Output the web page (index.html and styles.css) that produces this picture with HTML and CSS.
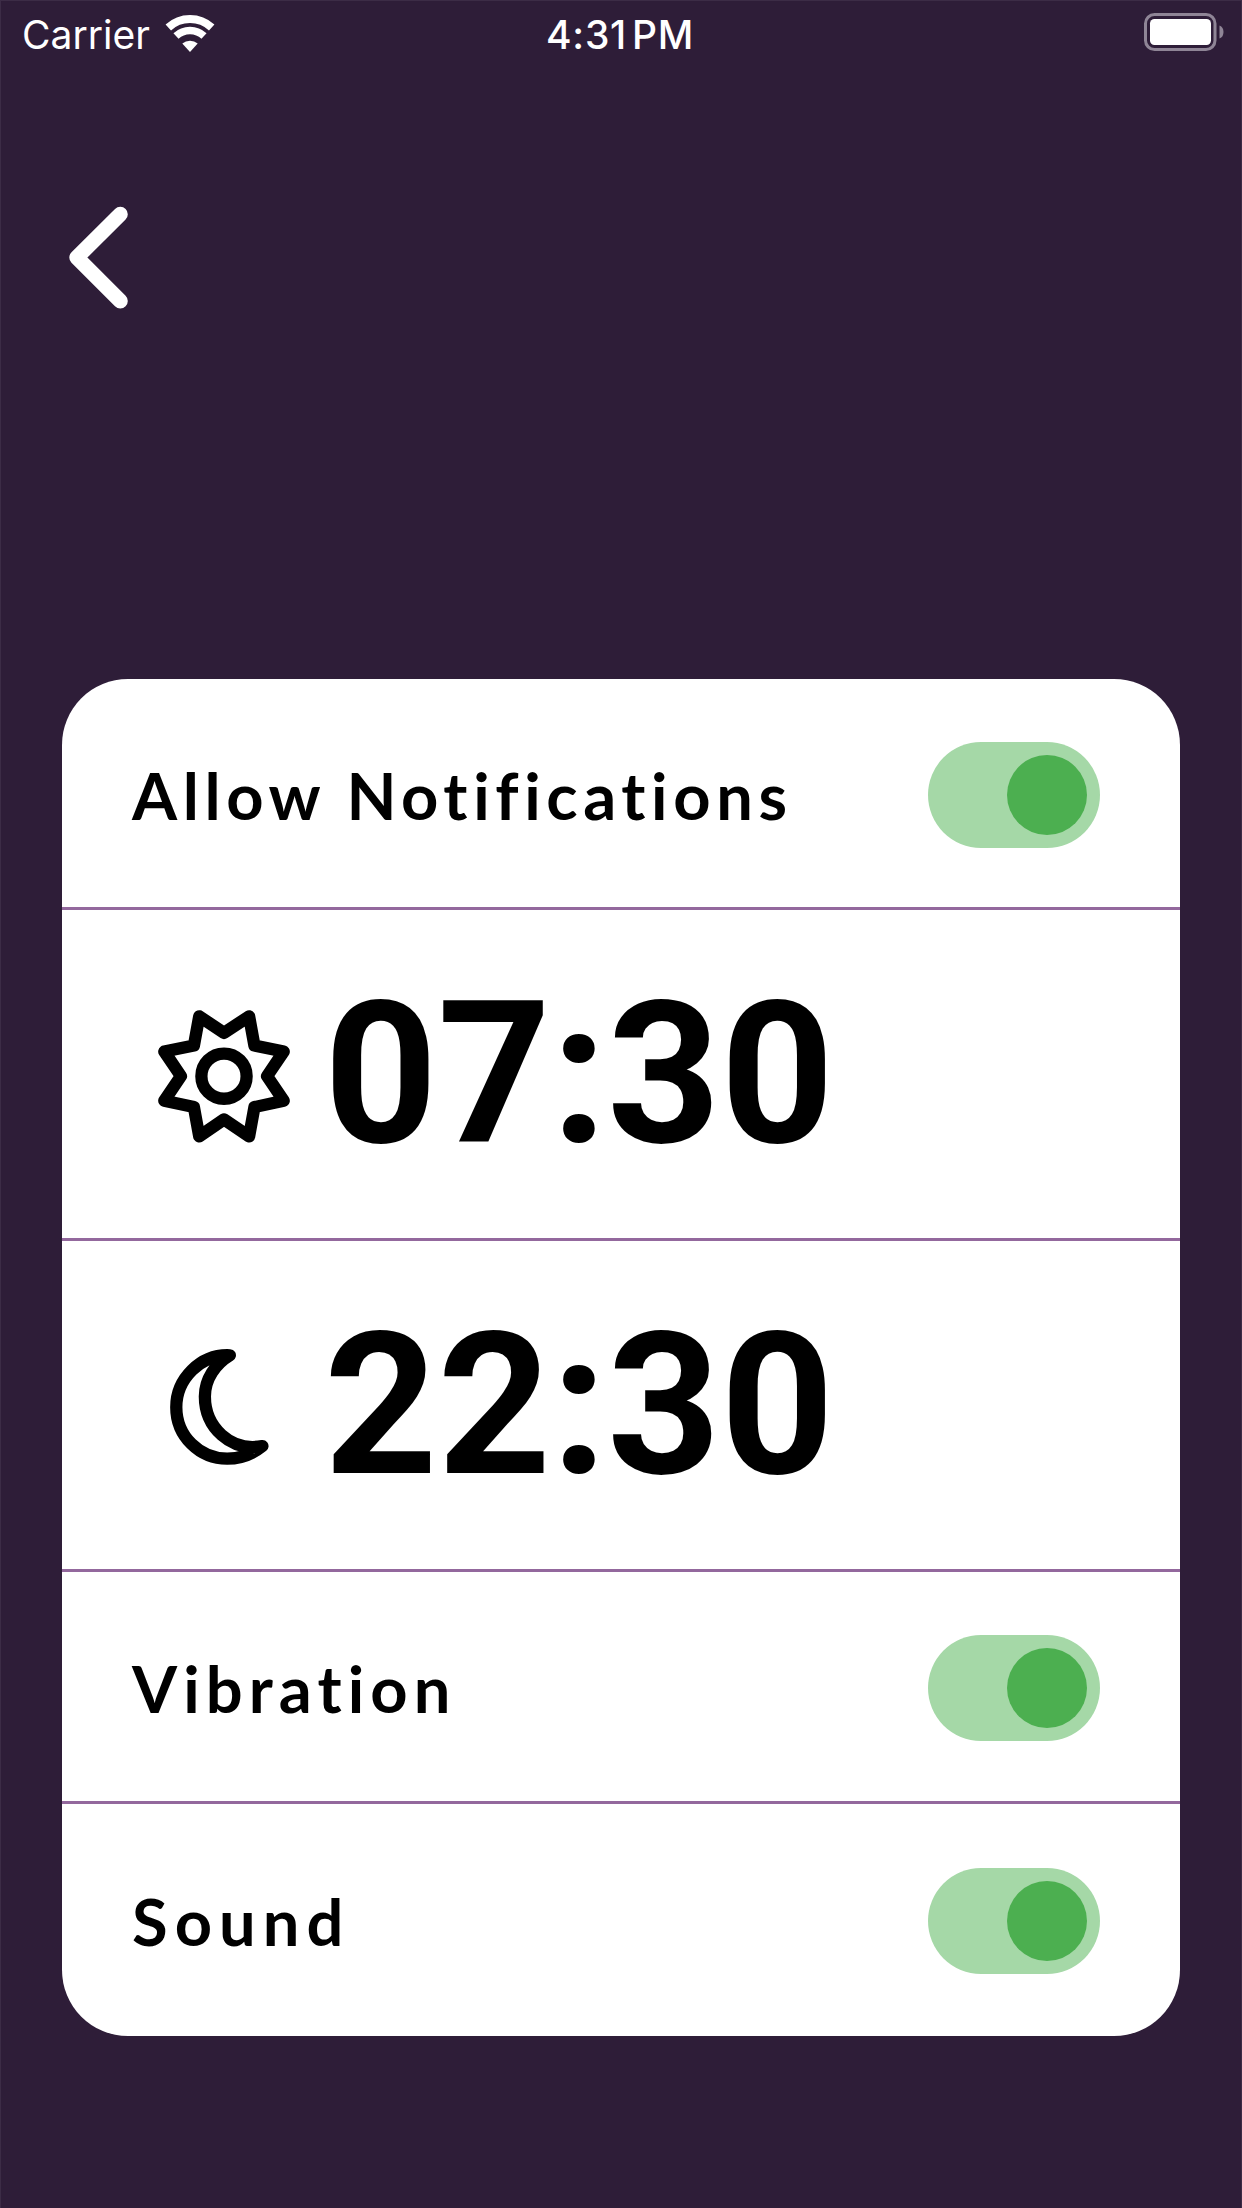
FILE: index.html
```
<!DOCTYPE html>
<html lang="en">
<head>
    <meta charset="UTF-8">
    <meta name="viewport" content="width=device-width, initial-scale=1.0">
    <title>Notifications</title>
    <link rel="stylesheet" href="styles.css">
</head>
<body>
    <div class="screen">
        <header class="status-bar">
            <div class="carrier">
                <span class="carrier-name">Carrier</span>
                <svg class="wifi" viewBox="0 0 50 38" width="50" height="38">
                    <path d="M3.3 14.5 A32 32 0 0 1 46.7 14.5" transform="translate(0 -1)" fill="none" stroke="#fff" stroke-width="8"/>
                    <path d="M11 22.5 A20.5 20.5 0 0 1 39 22.5" transform="translate(0 -0.5)" fill="none" stroke="#fff" stroke-width="7.5"/>
                    <path d="M25 38 L17.3 29.5 A12 12 0 0 1 32.7 29.5 Z" fill="#fff"/>
                </svg>
            </div>
            <span class="clock">4:31<span class="ampm">PM</span></span>
            <svg class="battery" viewBox="0 0 80 38" width="80" height="38">
                <rect x="1.5" y="1.5" width="69.5" height="35" rx="9" fill="none" stroke="#8f8596" stroke-width="3"/>
                <rect x="6" y="6" width="61" height="26" rx="4.5" fill="#fff"/>
                <path d="M75.5 12.5 Q79.5 14 79.5 19 Q79.5 24 75.5 25.5 Z" fill="#8f8596"/>
            </svg>
        </header>

        <a class="back" href="#" aria-label="Back">
            <svg viewBox="0 0 60 104" width="60" height="104">
                <path d="M51.3 8.3 L7.8 51.5 L51.3 95" fill="none" stroke="#fff" stroke-width="15" stroke-linecap="round" stroke-linejoin="round"/>
            </svg>
        </a>

        <main class="card">
            <div class="row">
                <span class="label label-allow">Allow Notifications</span>
                <span class="toggle"><span class="thumb"></span></span>
            </div>
            <div class="row row-time">
                <svg class="icon" viewBox="100 67 430 430">
                    <path d="M236 107 L310.5 157 L386 107 L402 195 L490 213 L440 287 L490 361 L402 380 L386 468 L310.5 417 L236 468 L220 380 L131 361 L181 287 L131 213 L220 195 Z"/>
                    <circle cx="310.5" cy="287" r="68"/>
                </svg>
                <span class="time">07:30</span>
            </div>
            <div class="row row-time">
                <svg class="icon" viewBox="100 70 430 430">
                    <path d="M328 134 C240 130 167 205 167 290 C167 378 238 445 320 445 C360 445 395 432 426 407 C330 425 253 350 253 258 C253 205 285 160 328 134 Z"/>
                </svg>
                <span class="time">22:30</span>
            </div>
            <div class="row row-vibration">
                <span class="label label-vibration">Vibration</span>
                <span class="toggle"><span class="thumb"></span></span>
            </div>
            <div class="row row-last">
                <span class="label label-sound">Sound</span>
                <span class="toggle"><span class="thumb"></span></span>
            </div>
        </main>
    </div>
</body>
</html>
```
FILE: styles.css
```
* {
    box-sizing: border-box;
}
body {
    margin: 0;
    background-color: #2e1d38;
}
.screen {
    width: 1242px;
    height: 2208px;
    background-color: #2e1d38;
    border: 1px solid #3c2c46;
    border-bottom: none;
    overflow: hidden;
}
.status-bar {
    display: grid;
    grid-template-columns: 1fr auto 1fr;
    height: 68px;
    padding: 12px 17px 0 21px;
    color: #fff;
    font-family: Inter, sans-serif;
    font-size: 39px;
    line-height: 44px;
}
.carrier {
    display: flex;
    gap: 15px;
}
.wifi {
    margin-top: 1px;
}
.clock {
    margin-left: -6px;
    font-weight: 500;
    letter-spacing: 0.7px;
}
.ampm {
    margin-left: 5px;
}
.battery {
    justify-self: end;
}
.back {
    display: block;
    width: 60px;
    height: 104px;
    margin: 137px 0 0 68px;
}
.card {
    width: 1118px;
    margin: 369px auto 0;
    background-color: #fff;
    border-radius: 66px;
    overflow: hidden;
}
.row {
    display: flex;
    align-items: center;
    justify-content: space-between;
    height: 231px;
    padding: 3px 80px 0 70px;
    border-bottom: 3px solid #93689d;
}
.row-time {
    justify-content: flex-start;
    height: 331px;
    padding: 0 80px 0 92px;
}
.row-vibration {
    height: 232px;
}
.row-last {
    border-bottom: none;
    height: 232px;
    padding-top: 1px;
}
.label {
    color: #000;
    font-family: Lato, sans-serif;
    font-size: 65px;
    font-weight: 700;
    white-space: nowrap;
}
.label-allow {
    letter-spacing: 5.6px;
}
.label-vibration {
    letter-spacing: 6.1px;
}
.label-sound {
    letter-spacing: 7.1px;
}
.time {
    margin-left: 27px;
    color: #000;
    font-family: Roboto, sans-serif;
    font-size: 198px;
    font-weight: 700;
    line-height: 1;
}
.icon {
    width: 143px;
    height: 143px;
    fill: none;
    stroke: #000;
    stroke-width: 37;
    stroke-linecap: round;
    stroke-linejoin: round;
}
.toggle {
    display: flex;
    align-items: center;
    justify-content: flex-end;
    width: 172px;
    height: 106px;
    padding-right: 13px;
    background-color: #a5d8a7;
    border-radius: 53px;
}
.thumb {
    width: 80px;
    height: 80px;
    background-color: #4caf50;
    border-radius: 50%;
}
```
